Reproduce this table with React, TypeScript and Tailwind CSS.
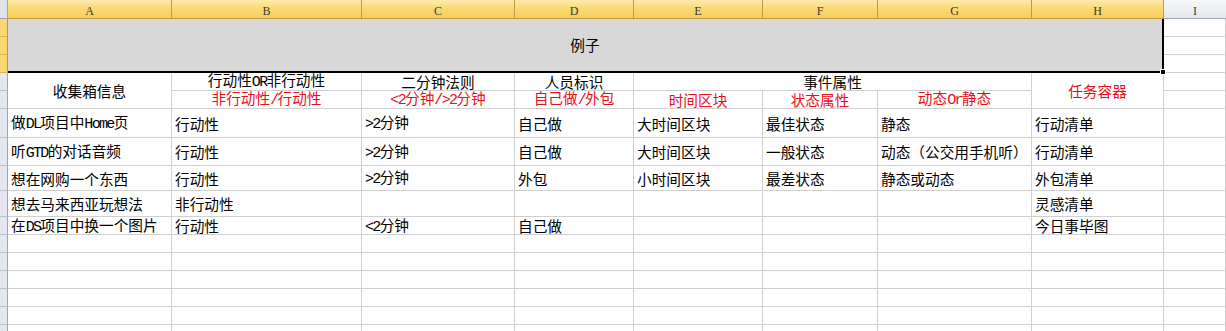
import React from "react";

const LETTERS = ["A", "B", "C", "D", "E", "F", "G", "H"];

const ROWS: string[][] = [
  ["做DL项目中Home页", "行动性", ">2分钟", "自己做", "大时间区块", "最佳状态", "静态", "行动清单"],
  ["听GTD的对话音频", "行动性", ">2分钟", "自己做", "大时间区块", "一般状态", "动态（公交用手机听）", "行动清单"],
  ["想在网购一个东西", "行动性", ">2分钟", "外包", "小时间区块", "最差状态", "静态或动态", "外包清单"],
  ["想去马来西亚玩想法", "非行动性", "", "", "", "", "", "灵感清单"],
  ["在DS项目中换一个图片", "行动性", "<2分钟", "自己做", "", "", "", "今日事毕图"],
];

// Latin runs are set half-width, the way the sheet's CJK font draws them
function Txt({ s }: { s: string }) {
  const parts = s.split(/([\x20-\x7e]+)/).filter(Boolean);
  return (
    <span className="leading-[16px]">
      {parts.map((p, i) =>
        /^[\x20-\x7e]+$/.test(p) ? (
          <span key={i} className="font-['Liberation_Mono',monospace] text-[15px] tracking-[-1.67px]">
            {p}
          </span>
        ) : (
          <span key={i}>{p}</span>
        )
      )}
    </span>
  );
}

function Cell({ children, className = "" }: { children?: React.ReactNode; className?: string }) {
  return (
    <div className={`flex items-center whitespace-nowrap border-r border-b border-[#d0d0d0] ${className}`}>
      {children}
    </div>
  );
}

function RowHead({ active = false }: { active?: boolean }) {
  return active ? (
    <div className="border-r border-b border-r-[#b99545] border-b-[#d9b257] bg-[#f9d771]" />
  ) : (
    <div className="border-r border-b border-r-[#9ea5b6] border-b-[#b9bfcc] bg-[#e4e7ef]" />
  );
}

function ColHead({ letter }: { letter: string }) {
  return (
    <div className="flex items-center justify-center border-r border-b border-r-[#c09a45] border-b-[#c19a40] bg-[linear-gradient(to_bottom,#fcebae_0%,#f9da74_45%,#f6cf5c_100%)] pt-[3px] font-['Liberation_Serif',serif] text-[12px] text-[#3a3a3a]">
      {letter}
    </div>
  );
}

export default function App() {
  return (
    <div className="h-[331px] w-full overflow-hidden bg-white font-['Noto_Sans_CJK_SC',sans-serif] text-[14.67px] leading-none text-black">
      <div className="grid grid-cols-[8px_164px_190px_153px_119px_129px_115px_154px_132px_1fr] grid-rows-[19px_18px_18px_18px_18px_18px_29px_28px_25px_26px_18px_18px_18px_18px_18px_18px_18px]">
        {/* column header strip */}
        <div className="border-r border-b border-r-[#9ea5b6] border-b-[#9ea5b6] bg-[#dfe3ea]" />
        {LETTERS.map((l) => (
          <ColHead key={l} letter={l} />
        ))}
        <div className="flex items-center justify-center border-b border-b-[#9ea5b6] bg-[linear-gradient(to_bottom,#f7f8fa,#e3e6eb)] pt-[3px] font-['Liberation_Serif',serif] text-[12px] text-[#3a3a3a]">
          I
        </div>

        {/* rows 1-3: merged title block */}
        <RowHead active />
        <div className="relative col-span-8 row-span-3 flex items-center justify-center border-r-2 border-b-2 border-black bg-[#d8d8d8]">
          <span>例子</span>
          <div className="absolute -right-[4px] -bottom-[4px] h-[6px] w-[6px] border border-white bg-black" />
        </div>
        <Cell />
        <RowHead active />
        <Cell />
        <RowHead active />
        <Cell />

        {/* row 4 */}
        <RowHead />
        <Cell className="row-span-2 justify-center">
          <Txt s="收集箱信息" />
        </Cell>
        <Cell className="justify-center">
          <Txt s="行动性OR非行动性" />
        </Cell>
        <Cell className="justify-center">
          <Txt s="二分钟法则" />
        </Cell>
        <Cell className="justify-center">
          <Txt s="人员标识" />
        </Cell>
        <Cell className="col-span-3 justify-center">
          <Txt s="事件属性" />
        </Cell>
        <Cell className="row-span-2 justify-center text-[#e8101c]">
          <Txt s="任务容器" />
        </Cell>
        <Cell />

        {/* row 5 */}
        <RowHead />
        {["非行动性/行动性", "<2分钟/>2分钟", "自己做/外包", "时间区块", "状态属性", "动态Or静态"].map((t) => (
          <Cell key={t} className="justify-center text-[#e8101c]">
            <Txt s={t} />
          </Cell>
        ))}
        <Cell />

        {/* inbox items */}
        {ROWS.map((r, ri) => (
          <React.Fragment key={ri}>
            <RowHead />
            {r.map((v, ci) => (
              <Cell key={ci} className="pl-[3px] pt-[1px]">
                {v && <Txt s={v} />}
              </Cell>
            ))}
            <Cell />
          </React.Fragment>
        ))}

        {/* blank rows */}
        {Array.from({ length: 6 }).map((_, ri) => (
          <React.Fragment key={`e${ri}`}>
            <RowHead />
            {Array.from({ length: 9 }).map((__, ci) => (
              <Cell key={ci} />
            ))}
          </React.Fragment>
        ))}
      </div>
    </div>
  );
}
